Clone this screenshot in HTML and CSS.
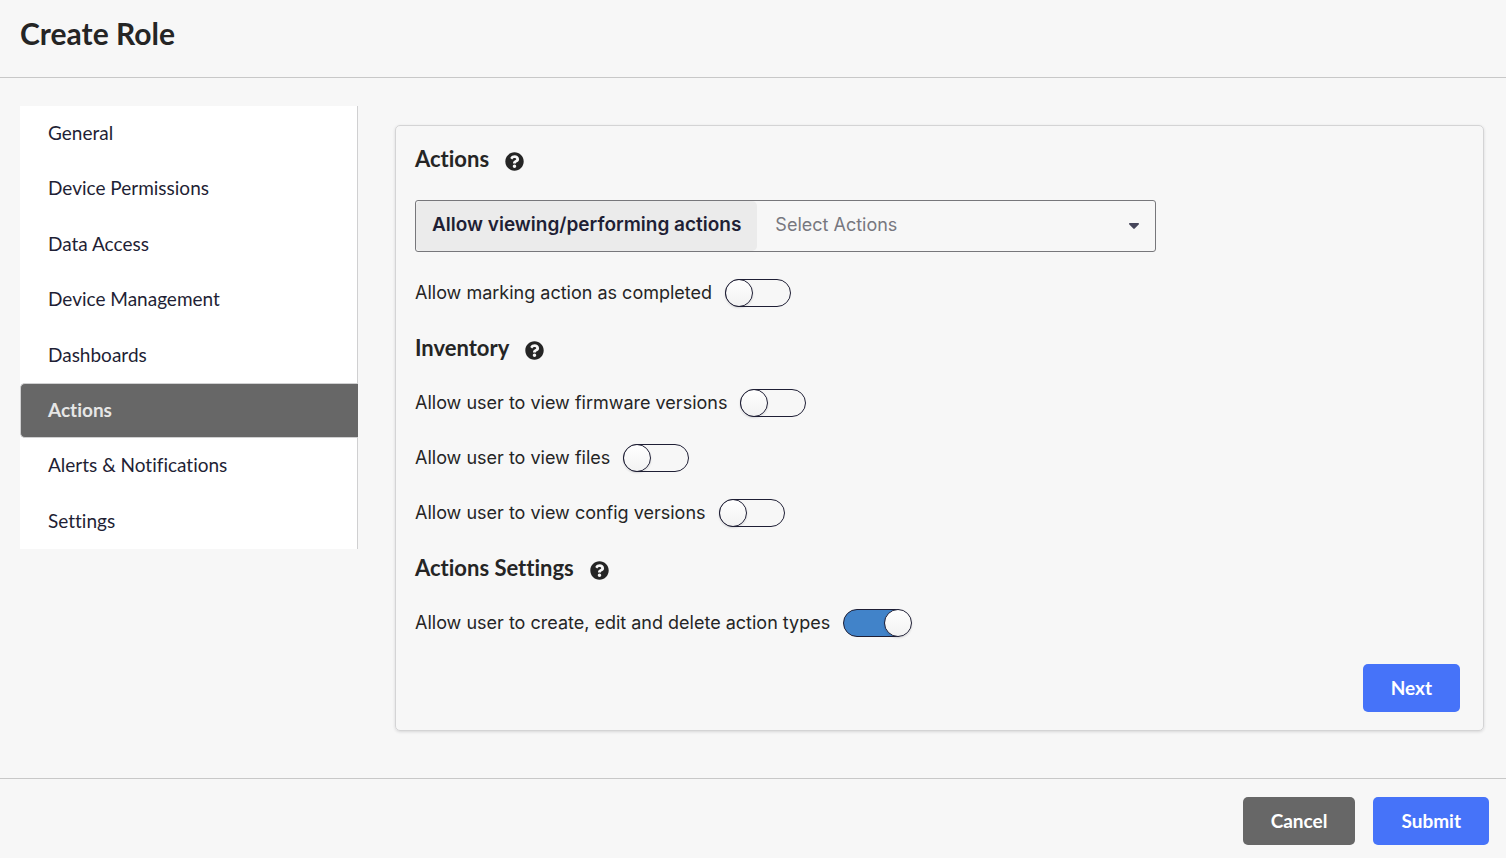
FILE: index.html
```
<!DOCTYPE html>
<html lang="en">
<head>
    <meta charset="UTF-8">
    <meta name="viewport" content="width=device-width, initial-scale=1.0">
    <title>Create Role</title>
    <link rel="stylesheet" href="styles.css">
</head>
<body>
    <!-- Help icon, shared by the section headings -->
    <svg class="defs" width="0" height="0" aria-hidden="true">
        <symbol id="help" viewBox="0 0 512 512">
            <path d="M504 256c0 136.997-111.043 248-248 248S8 392.997 8 256C8 119.083 119.043 8 256 8s248 111.083 248 248zM262.655 90c-54.497 0-89.255 22.957-116.549 63.758-3.536 5.286-2.353 12.415 2.715 16.258l34.699 26.31c5.205 3.947 12.621 3.008 16.665-2.122 17.864-22.658 30.113-35.797 57.303-35.797 20.429 0 45.698 13.148 45.698 32.958 0 14.976-12.363 22.667-32.534 33.976C247.128 238.528 216 254.941 216 296v4c0 6.627 5.373 12 12 12h56c6.627 0 12-5.373 12-12v-1.333c0-28.462 83.186-29.647 83.186-106.667 0-58.002-60.165-102-116.531-102zM256 338c-25.365 0-46 20.635-46 46 0 25.364 20.635 46 46 46s46-20.636 46-46c0-25.365-20.635-46-46-46z"/>
        </symbol>
    </svg>

    <header class="header">
        <h1>Create Role</h1>
    </header>

    <main class="content">
        <nav class="menu">
            <a href="#general">General</a>
            <a href="#device-permissions">Device Permissions</a>
            <a href="#data-access">Data Access</a>
            <a href="#device-management">Device Management</a>
            <a href="#dashboards">Dashboards</a>
            <a href="#actions" class="active">Actions</a>
            <a href="#alerts">Alerts &amp; Notifications</a>
            <a href="#settings">Settings</a>
        </nav>

        <form class="segment" id="actions">
            <h2>Actions <svg class="help"><use href="#help"/></svg></h2>

            <div class="field">
                <label for="actionSelect">Allow viewing/performing actions</label>
                <div class="dropdown">
                    <select id="actionSelect">
                        <option value="">Select Actions</option>
                    </select>
                    <svg class="caret" viewBox="0 0 10 6"><path d="M1 0h8c.9 0 1.300 1 .7 1.600L5.700 5.600c-.4.400-1 .4-1.400 0L.3 1.600C-.3 1 .1 0 1 0z"/></svg>
                </div>
            </div>

            <label class="toggle">
                Allow marking action as completed
                <input type="checkbox">
            </label>

            <h2>Inventory <svg class="help"><use href="#help"/></svg></h2>

            <label class="toggle">
                Allow user to view firmware versions
                <input type="checkbox">
            </label>
            <label class="toggle">
                Allow user to view files
                <input type="checkbox">
            </label>
            <label class="toggle">
                Allow user to view config versions
                <input type="checkbox">
            </label>

            <h2>Actions Settings <svg class="help"><use href="#help"/></svg></h2>

            <label class="toggle">
                Allow user to create, edit and delete action types
                <input type="checkbox" checked>
            </label>

            <button type="button" class="button primary next">Next</button>
        </form>
    </main>

    <footer class="footer">
        <button type="button" class="button">Cancel</button>
        <button type="submit" form="actions" class="button primary">Submit</button>
    </footer>
</body>
</html>
```
FILE: styles.css
```
*, *::before {
    box-sizing: border-box;
}
body {
    margin: 0;
    background-color: #f7f7f7;
    color: #252525;
    font-family: Inter, sans-serif;
    font-size: 18px;
    line-height: 28px;
}
.defs {
    position: absolute;
}
.header {
    padding: 13px 20px 24px;
    border-bottom: 1px solid #c8c8c8;
}
h1 {
    margin: 0;
    font: bold 30px/40px Lato, sans-serif;
}
h1, h2, .menu {
    font-variant-ligatures: no-common-ligatures;
}
.content {
    display: grid;
    grid-template-columns: 338px 1fr;
    gap: 37px;
    align-items: start;
    padding: 28px 22px 47px 20px;
}
.menu {
    display: flex;
    flex-direction: column;
    min-height: 443px;
    background-color: #fff;
    border-right: 1px solid #d0d0d1;
}
.menu a {
    flex: 1;
    padding: 12px 27px 14px;
    border: 1px solid transparent;
    color: #1f1f35;
    font-family: Lato, sans-serif;
    font-size: 19px;
    line-height: 27px;
    text-decoration: none;
}
.menu a.active {
    margin-right: -1px;
    background-color: #676767;
    border-color: #d0d0d1;
    border-right: none;
    border-radius: 5px 0 0 5px;
    color: #e6e6e6;
    font-weight: bold;
}
.segment {
    display: flex;
    flex-direction: column;
    align-items: flex-start;
    gap: 27px;
    margin-top: 19px;
    padding: 19px 23px 18px 19px;
    border: 1px solid #d4d4d5;
    border-radius: 5px;
    box-shadow: 0 1px 3px rgba(34, 36, 38, 0.15);
}
h2 {
    display: flex;
    gap: 16px;
    margin: 0;
    font-family: Lato, sans-serif;
    font-size: 22px;
    line-height: 28px;
}
.help {
    width: 19px;
    height: 19px;
    margin-top: 7px;
    fill: #252525;
}
.field {
    display: flex;
    width: 100%;
    max-width: 741px;
    border: 1px solid #77777b;
    border-radius: 3px;
}
.field label {
    padding: 10px 16px 12px;
    background-color: #ebebeb;
    border-radius: 5px;
    color: #1f1f35;
    font-size: 19px;
    font-weight: 600;
}
.dropdown {
    position: relative;
    flex: 1;
}
.dropdown select {
    width: 100%;
    height: 50px;
    padding: 0 40px 2px 18px;
    appearance: none;
    background: none;
    border: none;
    color: #77777f;
    font: inherit;
}
.caret {
    position: absolute;
    top: 22px;
    right: 16px;
    width: 10px;
    height: 6px;
    fill: #46465a;
    pointer-events: none;
}
.toggle {
    display: flex;
    align-items: center;
    gap: 13px;
}
.toggle input {
    position: relative;
    width: 66px;
    height: 28px;
    margin: 0;
    appearance: none;
    border: 1px solid #1f1f35;
    border-radius: 14px;
}
.toggle input::before {
    content: "";
    position: absolute;
    top: -1px;
    left: -1px;
    width: 28px;
    height: 28px;
    background: linear-gradient(#fff, #f2f2f2);
    border: 1px solid #1f1f35;
    border-radius: 50%;
    box-shadow: 0 1px 2px rgba(34, 36, 38, 0.15);
}
.toggle input:checked {
    background-color: #4183c9;
}
.toggle input:checked::before {
    left: 40px;
}
.button {
    padding: 10px 28px;
    background-color: #676767;
    border: none;
    border-radius: 5px;
    color: #fff;
    font: bold 19px/28px Lato, sans-serif;
    cursor: pointer;
}
.primary {
    background-color: #4673f9;
}
.next {
    align-self: flex-end;
}
.footer {
    display: flex;
    justify-content: flex-end;
    gap: 18px;
    padding: 18px 17px 13px;
    border-top: 1px solid #c8c8c8;
}
```
